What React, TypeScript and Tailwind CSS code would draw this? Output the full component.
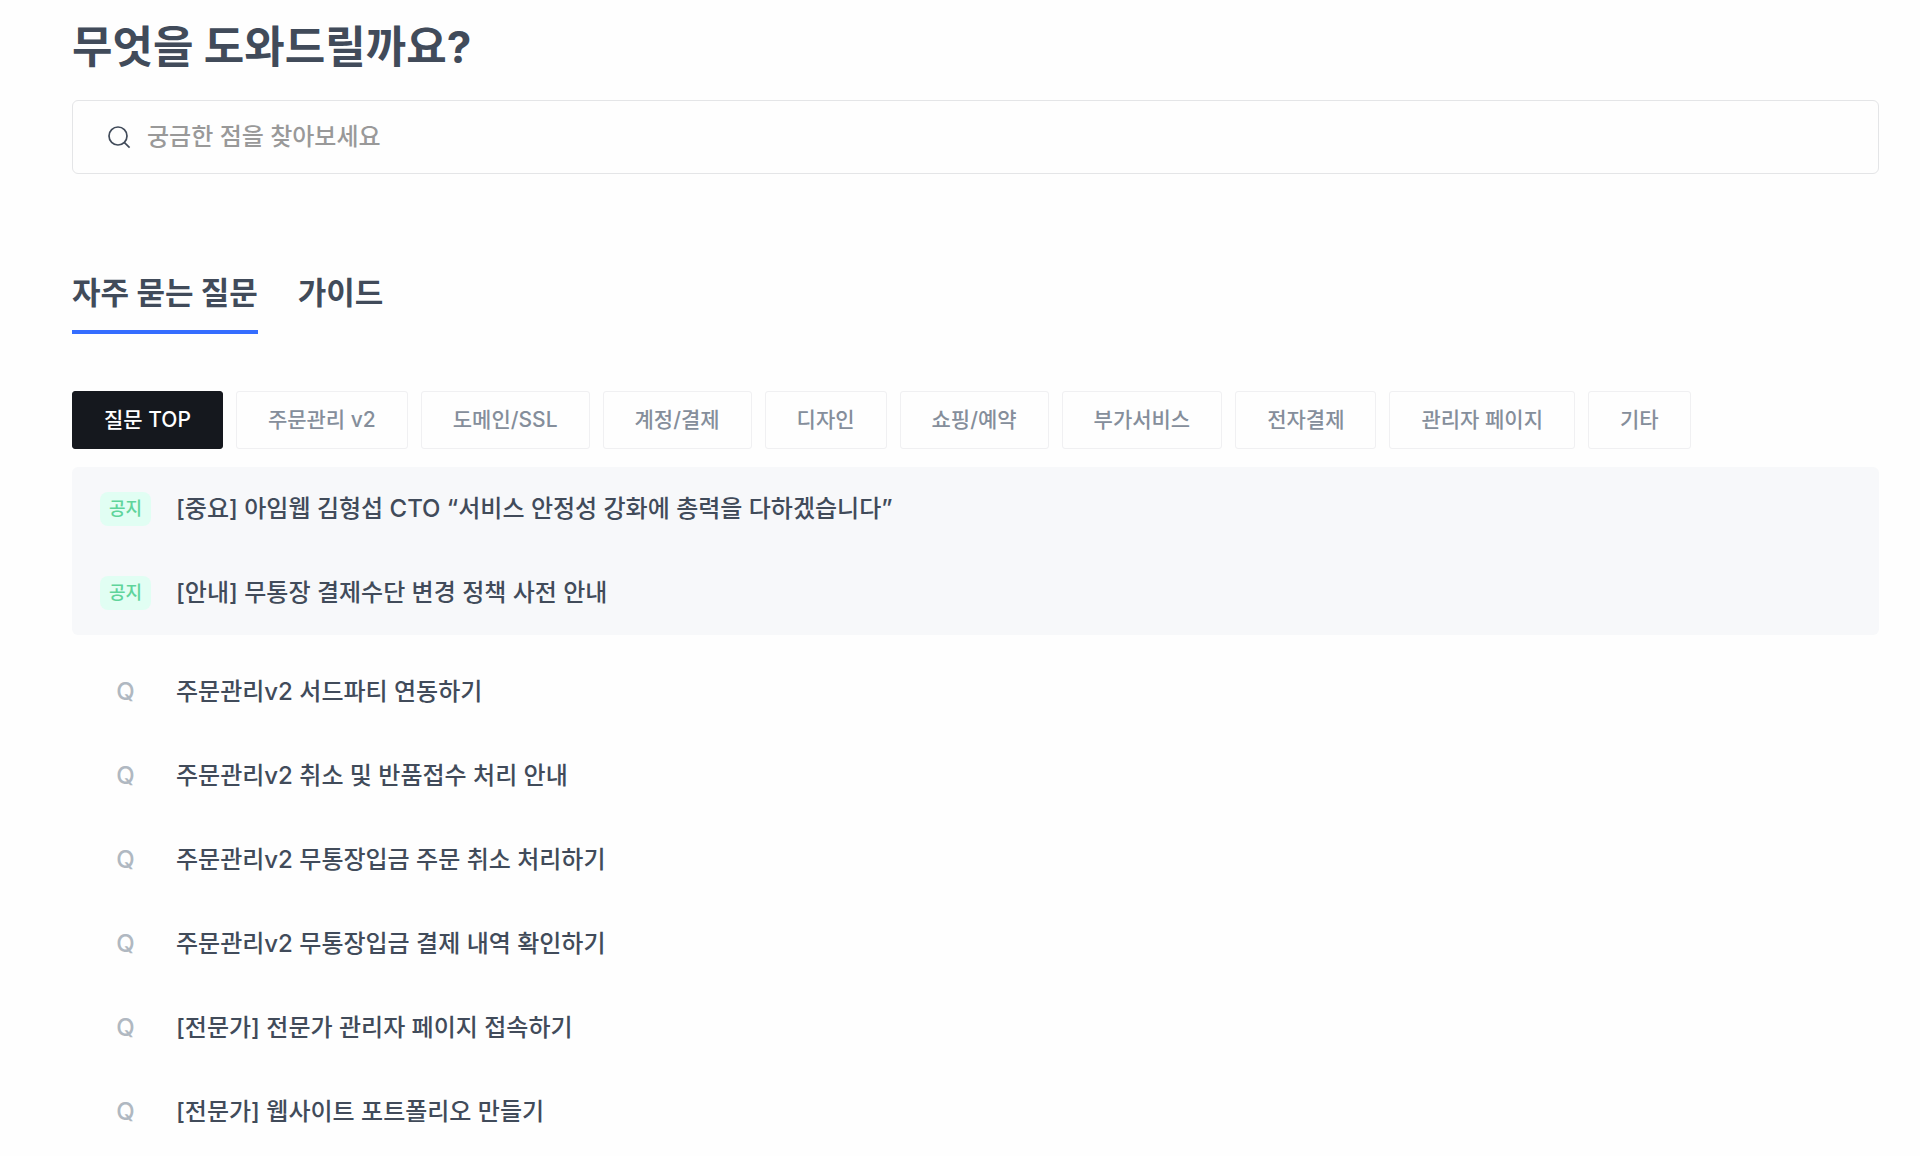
import React, { useState } from 'react';

const tabs = ['자주 묻는 질문', '가이드'];

const categories = [
    '질문 TOP',
    '주문관리 v2',
    '도메인/SSL',
    '계정/결제',
    '디자인',
    '쇼핑/예약',
    '부가서비스',
    '전자결제',
    '관리자 페이지',
    '기타',
];

const notices = [
    '[중요] 아임웹 김형섭 CTO “서비스 안정성 강화에 총력을 다하겠습니다”',
    '[안내] 무통장 결제수단 변경 정책 사전 안내',
];

const questions = [
    '주문관리v2 서드파티 연동하기',
    '주문관리v2 취소 및 반품접수 처리 안내',
    '주문관리v2 무통장입금 주문 취소 처리하기',
    '주문관리v2 무통장입금 결제 내역 확인하기',
    '[전문가] 전문가 관리자 페이지 접속하기',
    '[전문가] 웹사이트 포트폴리오 만들기',
];

const SearchIcon: React.FC = () => (
    <svg className="h-6 w-6 shrink-0 text-[#414b5a]" viewBox="0 0 24 24" fill="none" stroke="currentColor" strokeWidth="1.7" aria-hidden="true">
        <circle cx="11" cy="11" r="9" />
        <path d="M17.2 17.4 22.6 22.6" />
    </svg>
);

const App: React.FC = () => {
    const [activeTab, setActiveTab] = useState(tabs[0]);
    const [activeCategory, setActiveCategory] = useState(categories[0]);
    const [query, setQuery] = useState('');

    return (
        <main className="min-h-screen bg-[#fefefe] pt-[17px] pr-[41px] pl-[72px] font-['Inter','Noto_Sans_CJK_KR',sans-serif] font-medium text-[#414b5a]">
            <h1 className="text-[44px] leading-[60px] font-bold">무엇을 도와드릴까요?</h1>

            <label className="mt-[23px] flex h-[74px] items-center gap-4 rounded-md border border-[#e4e5e7] pr-8 pl-[34px]">
                <SearchIcon />
                <input
                    type="text"
                    aria-label="검색"
                    value={query}
                    onChange={(e) => setQuery(e.target.value)}
                    placeholder="궁금한 점을 찾아보세요"
                    className="w-full bg-transparent text-2xl font-medium outline-none placeholder:text-[#999999]"
                />
            </label>

            <nav className="mt-[90px] flex gap-10">
                {tabs.map((tab) => (
                    <button
                        key={tab}
                        onClick={() => setActiveTab(tab)}
                        className={`h-[70px] border-b-4 pt-1 pb-3 text-[31px] leading-[50px] font-bold ${tab === activeTab ? 'border-[#356dff]' : 'border-transparent'}`}
                    >
                        {tab}
                    </button>
                ))}
            </nav>

            {/* Category filter */}
            <div className="mt-[57px] flex flex-wrap gap-[13px]">
                {categories.map((category) => (
                    <button
                        key={category}
                        onClick={() => setActiveCategory(category)}
                        className={`h-[58px] rounded-[3px] border px-[31px] text-[21px] leading-8 ${category === activeCategory ? 'border-[#15181e] bg-[#15181e] text-white' : 'border-[#f0f0f2] text-[#858e9b]'}`}
                    >
                        {category}
                    </button>
                ))}
            </div>

            <ul className="mt-[18px] rounded-md bg-[#f7f8fa]">
                {notices.map((title) => (
                    <li key={title}>
                        <a href="#" className="flex h-[84px] items-center gap-[25px] px-7 text-2xl">
                            <span className="flex h-[34px] w-[51px] items-center justify-center rounded-lg bg-[#e1fef3] text-lg text-[#5fd49b]">공지</span>
                            <span>{title}</span>
                        </a>
                    </li>
                ))}
            </ul>

            <ul className="mt-[15px]">
                {questions.map((title) => (
                    <li key={title}>
                        <a href="#" className="flex h-[84px] items-center gap-[25px] px-7 text-2xl">
                            <span className="w-[51px] text-center text-[#b0b8c1]">Q</span>
                            <span>{title}</span>
                        </a>
                    </li>
                ))}
            </ul>
        </main>
    );
};

export default App;
